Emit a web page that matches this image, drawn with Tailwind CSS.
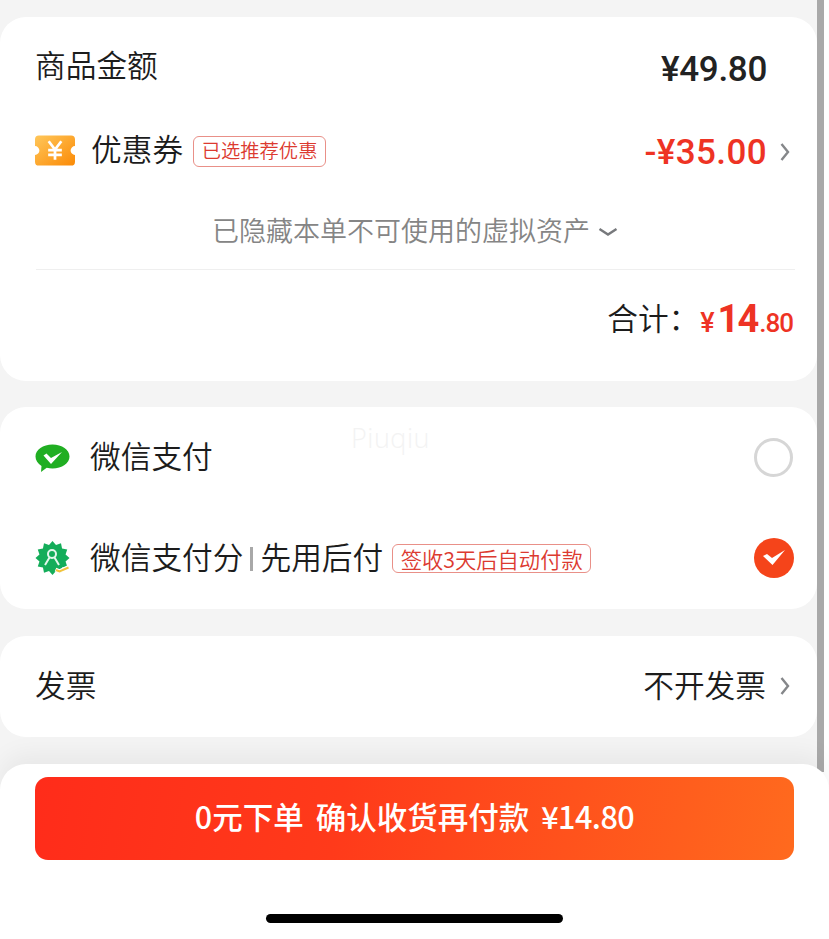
<!DOCTYPE html>
<html lang="zh">
<head>
<meta charset="utf-8">
<script src="https://cdn.jsdelivr.net/npm/@tailwindcss/browser@4"></script>
</head>
<body class="m-0">
<div class="relative flex h-[939px] w-[829px] flex-col overflow-hidden bg-[#f4f4f4] font-['Noto_Sans_CJK_SC','Noto_Sans',sans-serif] font-[350] text-[#1c1c1c]">
  <div class="absolute right-0 top-0 h-full w-[12px] bg-white"></div>
  <div class="absolute left-[817px] top-0 h-[772px] w-[7px] bg-[#a9a9a9]"></div>

  <main class="relative flex w-[817px] flex-col gap-[26px] pt-[17px]">
    <section class="flex h-[364px] flex-col rounded-[26px] bg-white pl-[36px] pr-[24px]">
      <div class="flex h-[100px] items-center justify-between pr-[26px]">
        <span class="ml-[-1px] pb-[5px] text-[30.7px] leading-none">商品金额</span>
        <span class="pt-[4px] font-['Roboto'] text-[35px] font-medium leading-none tracking-[-0.3px] text-[#222]">¥49.80</span>
      </div>
      <div class="flex h-[66px] items-center">
        <svg width="40" height="31" viewBox="0 0 41 31" class="ml-[-1px] mr-[16px] shrink-0">
          <defs><linearGradient id="t" x1="0" y1="0" x2="1" y2="1"><stop offset="0" stop-color="#ffc75a"/><stop offset="1" stop-color="#fb8a06"/></linearGradient></defs>
          <path d="M4 0H37a4 4 0 0 1 4 4V11a4.500 4.500 0 0 0 0 9V27a4 4 0 0 1-4 4H4a4 4 0 0 1-4-4V20a4.500 4.500 0 0 0 0-9V4a4 4 0 0 1 4-4Z" fill="url(#t)"/>
          <path d="M14 6l6.500 8.500L27 6M13.500 15h14M13.500 20h14M20.500 14v11" fill="none" stroke="#fff" stroke-width="2.800"/>
        </svg>
        <span class="pb-[4px] text-[30.7px] leading-none">优惠券</span>
        <span class="ml-[10px] mt-[2px] flex h-[31px] w-[133px] items-center justify-center rounded-[6px] border border-[#e99088] text-[19.3px] leading-none text-[#dc3a30]">已选推荐优惠</span>
        <span class="ml-auto pt-[4px] font-['Roboto'] text-[35px] font-medium leading-none tracking-[0.4px] text-[#ee3324]">-¥35.00</span>
        <svg width="10" height="20" viewBox="0 0 10 20" class="ml-[13px] mr-[3px] mt-[3px]"><path d="M1.500 2L8 10L1.500 18" fill="none" stroke="#85878a" stroke-width="2.400"/></svg>
      </div>
      <div class="flex h-[86px] items-start justify-center pl-[1px] pt-[33px] text-[27px] leading-none text-[#858585]">
        <span>已隐藏本单不可使用的虚拟资产</span>
        <svg width="20" height="10" viewBox="0 0 20 10" class="ml-[8px] mt-[11px]"><path d="M1.500 2L10 7.500L18.500 2" fill="none" stroke="#77797c" stroke-width="2.400"/></svg>
      </div>
      <div class="mr-[-2px] h-px bg-[#efefef]"></div>
      <div class="flex flex-1 items-start justify-end pt-[32px]">
        <span class="text-[30.7px] leading-none">合计：</span>
        <span class="ml-[1px] mt-[-2px] flex items-baseline font-['Roboto'] font-medium leading-none text-[#ee3324]">
          <span class="text-[27px]">¥</span><span class="ml-[3px] text-[38px] font-bold tracking-[-2px]">14</span><span class="ml-[2px] text-[26px] tracking-[-1px]">.80</span>
        </span>
      </div>
    </section>

    <section class="relative flex h-[202px] flex-col rounded-[26px] bg-white pl-[35px] pr-[24px]">
      <span class="absolute left-[351px] top-[17px] font-['Open_Sans'] text-[27px] leading-none tracking-[0.5px] text-[#f3f3f3]">Piuqiu</span>
      <div class="flex h-[101px] items-center">
        <svg width="35" height="30" viewBox="0 0 35 30" class="mr-[20px] mt-[1px] shrink-0">
          <path d="M17.500 1.500C27 1.500 34.500 6.800 34.500 13.500S27 25.500 17.500 25.500c-2 0-4-.2-5.800-.7L6 29l.5-6C2.800 20.700.5 17.300.5 13.500.5 6.800 8 1.500 17.500 1.500Z" fill="#20ae22"/>
          <path d="M8.500 12.500L11.500 10.500L16 15L27 9L16 21Z" fill="#fff"/>
        </svg>
        <span class="pb-[5px] text-[30.7px] leading-none">微信支付</span>
        <span class="ml-auto size-[39px] rounded-full border-[3px] border-[#d6d6d6]"></span>
      </div>
      <div class="flex h-[101px] items-center pb-[2px]">
        <svg width="35" height="34" viewBox="0 0 35 34" class="mr-[20px] shrink-0">
          <polygon points="17.500,0 21,3.960 26,2.280 27.050,7.450 32.220,8.500 30.540,13.500 34.500,17 30.540,20.500 32.220,25.500 27.050,26.550 26,31.720 21,30.040 17.500,34 14,30.040 9,31.720 7.950,26.550 2.780,25.500 4.460,20.500 .5,17 4.460,13.500 2.780,8.500 7.950,7.450 9,2.280 14,3.960" fill="#14ad5a"/>
          <circle cx="17" cy="13" r="4" fill="none" stroke="#e3f7ec" stroke-width="2"/>
          <path d="M10 24L14.500 16.500M24 24L19.500 16.500" fill="none" stroke="#e3f7ec" stroke-width="2"/>
          <path d="M20.500 28.500l4 1.800 9.500-4.500" fill="none" stroke="#fff" stroke-width="4"/>
          <path d="M21 29l3.500 1.500 9-4" fill="none" stroke="#f1c33d" stroke-width="2"/>
        </svg>
        <span class="pb-[3px] text-[30.7px] leading-none">微信支付分</span>
        <span class="mx-[7px] mt-[2px] h-[24px] w-[3px] bg-[#a8a8a8]"></span>
        <span class="pb-[3px] text-[30.7px] leading-none">先用后付</span>
        <span class="ml-[9px] mt-[2px] flex h-[29px] w-[199px] items-center justify-center rounded-[6px] border border-[#e99088] text-[21.3px] leading-none text-[#dc3a30]">签收3天后自动付款</span>
        <span class="ml-auto mr-[-1px] flex size-[40px] items-center justify-center rounded-full bg-[#f5441a]">
          <svg width="22" height="15" viewBox="0 0 22 15"><path d="M0 6L4 4L9 8L22 0L9.500 15Z" fill="#fff"/></svg>
        </span>
      </div>
    </section>

    <section class="mt-[1px] flex h-[101px] items-center justify-between rounded-[26px] bg-white pl-[36px] pr-[27px]">
      <span class="ml-[-1px] pb-[5px] text-[30.7px] leading-none">发票</span>
      <span class="flex items-center">
        <span class="pb-[5px] text-[30.7px] leading-none">不开发票</span>
        <svg width="10" height="20" viewBox="0 0 10 20" class="ml-[14px]"><path d="M1.500 2L8 10L1.500 18" fill="none" stroke="#85878a" stroke-width="2.400"/></svg>
      </span>
    </section>
  </main>

  <footer class="relative mt-[27px] flex flex-1 flex-col items-center rounded-t-[26px] bg-white pt-[13px] shadow-[0_-10px_24px_rgba(0,0,0,0.05)]">
    <button class="flex h-[83px] w-[759px] items-center justify-center gap-[12px] rounded-[13px] bg-[linear-gradient(100deg,#ff2c1a,#ff3a1a_40%,#ff6a1e)] pb-[4px] text-[30.5px] font-medium leading-none text-white">
      <span>0元下单</span><span>确认收货再付款</span><span class="tracking-[-0.5px]">¥14.80</span>
    </button>
    <div class="mt-[54px] h-[9px] w-[297px] rounded-full bg-black"></div>
  </footer>
</div>
</body>
</html>
